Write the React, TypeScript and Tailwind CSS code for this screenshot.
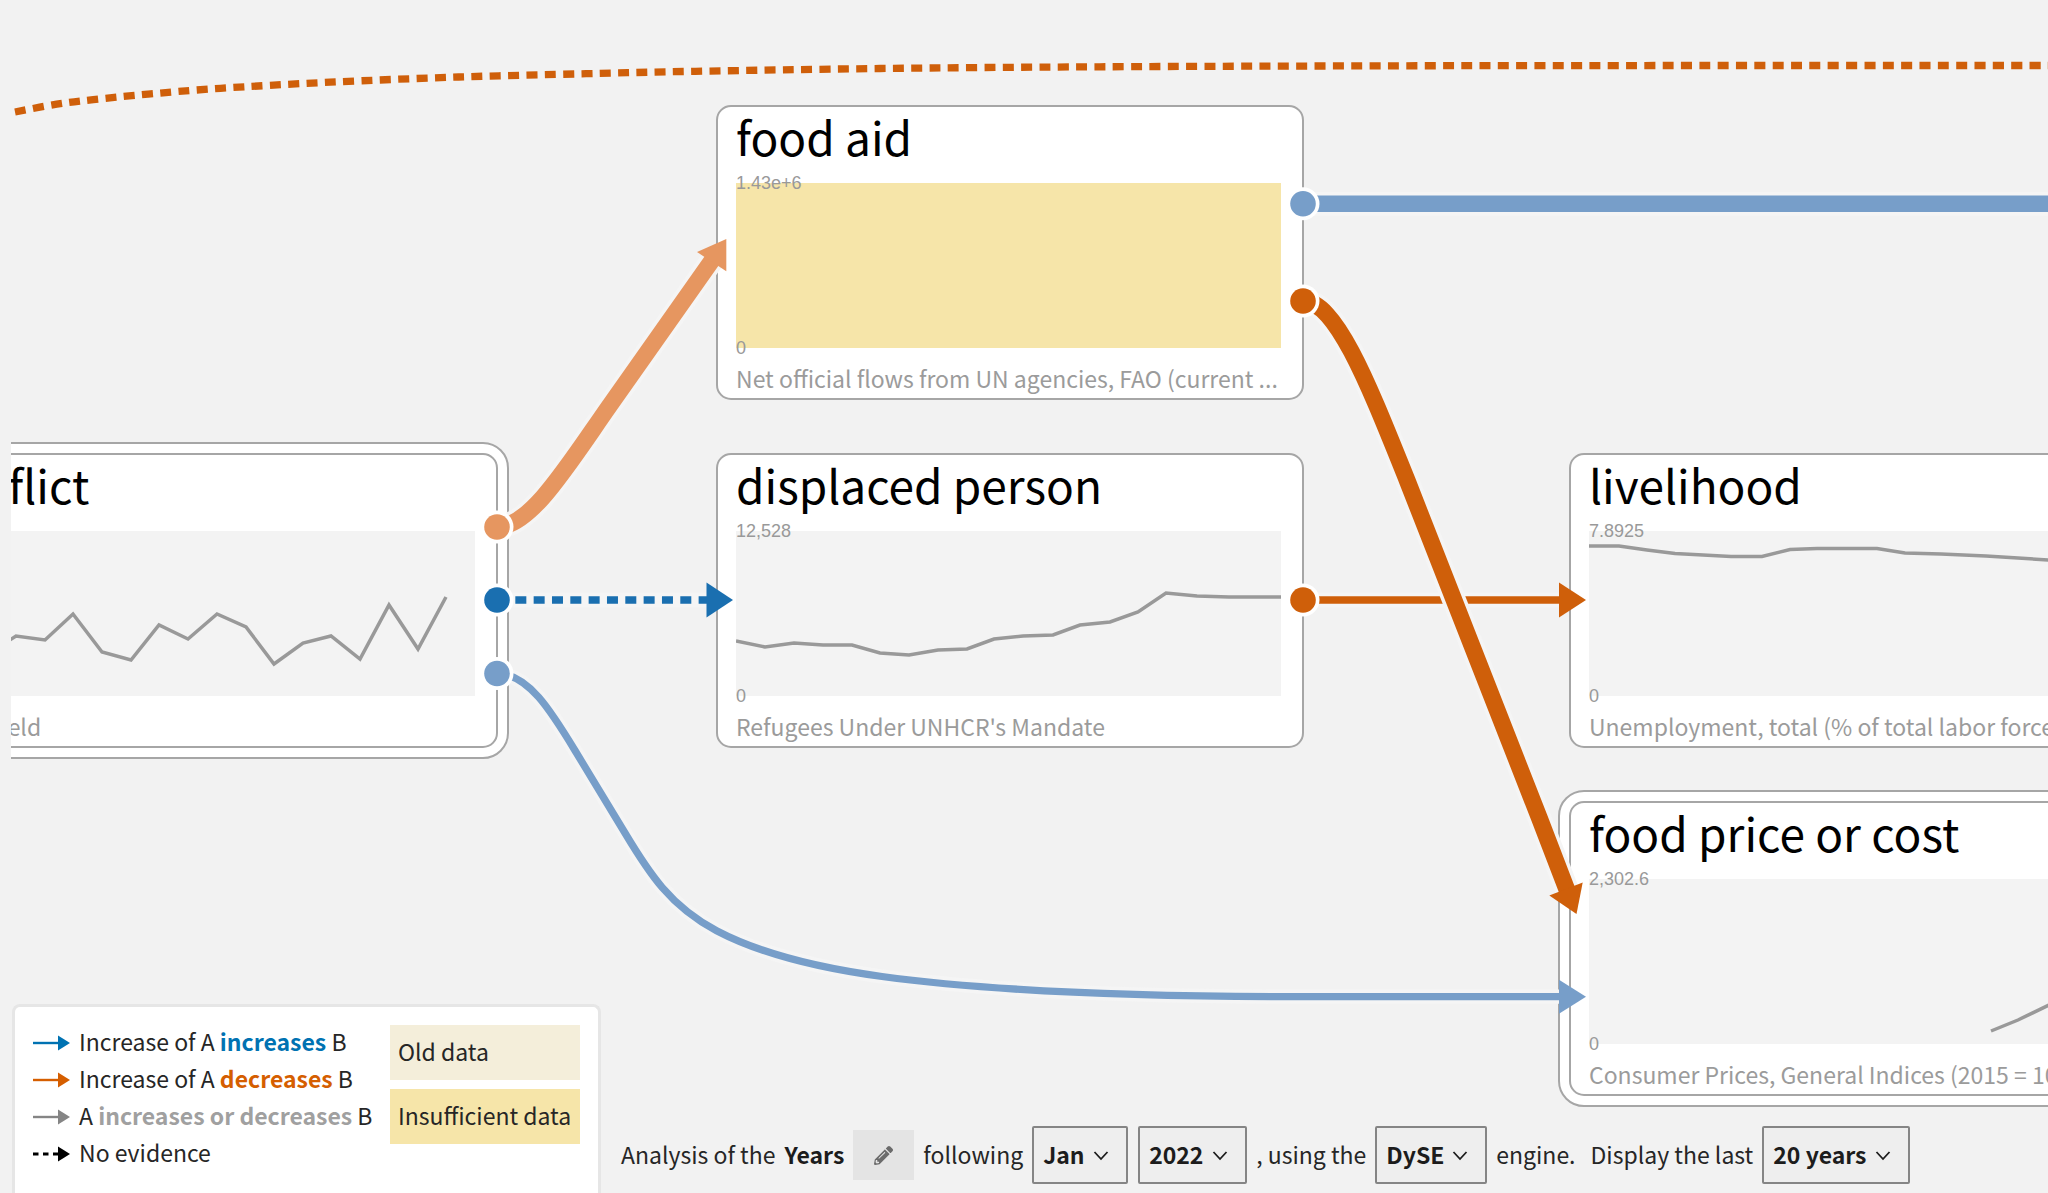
import type { ReactNode } from "react";
import { FaPencilAlt } from "react-icons/fa";

type Point = [number, number];

const SANS = "font-['Noto_Sans_CJK_SC','Open_Sans',sans-serif]";
const BLUE = "#1a6fb0";
const LIGHT_BLUE = "#779ec9";
const ORANGE = "#cf5f0a";
const LIGHT_ORANGE = "#e69660";
const HALO = "#f5f5f5";

/* Catmull-Rom spline through the points, written as cubic Béziers. */
function smooth(points: Point[]): string {
  let d = `M${points[0][0]} ${points[0][1]}`;
  for (let i = 0; i < points.length - 1; i++) {
    const p0 = points[Math.max(i - 1, 0)];
    const p1 = points[i];
    const p2 = points[i + 1];
    const p3 = points[Math.min(i + 2, points.length - 1)];
    const c1 = [p1[0] + (p2[0] - p0[0]) / 6, p1[1] + (p2[1] - p0[1]) / 6];
    const c2 = [p2[0] - (p3[0] - p1[0]) / 6, p2[1] - (p3[1] - p1[1]) / 6];
    d += ` C${c1[0]} ${c1[1]} ${c2[0]} ${c2[1]} ${p2[0]} ${p2[1]}`;
  }
  return d;
}

type NodeProps = {
  title: string;
  source: string;
  max?: string;
  line?: string;
  insufficient?: boolean;
};

function NodeCard({ title, source, max, line, insufficient }: NodeProps) {
  return (
    <article className="w-[588px] rounded-[15px] border-2 border-[#a6a6a6] bg-white px-[18px]">
      <h2 className="mb-[17px] truncate text-[46px] leading-[59px] text-black">{title}</h2>
      <div className={insufficient ? "relative h-[165px] w-[545px] bg-[#f6e5a9]" : "relative h-[165px] w-[545px] bg-[#f3f3f3]"}>
        {line && (
          <svg className="block h-full w-full" viewBox="0 0 545 165" aria-hidden="true">
            <polyline points={line} fill="none" stroke="#999" strokeWidth="3.5" strokeLinejoin="miter" />
          </svg>
        )}
        <span className="absolute -top-[9px] left-0 font-['Liberation_Sans',sans-serif] text-[18px] leading-[18px] text-[#999]">
          {max}
        </span>
        <span className="absolute -bottom-[9px] left-0 font-['Liberation_Sans',sans-serif] text-[18px] leading-[18px] text-[#999]">
          0
        </span>
      </div>
      <p className="mt-[10px] truncate text-[23px] leading-[40px] text-[#9b9b9b]">{source}</p>
    </article>
  );
}

function Ring({ children }: { children: ReactNode }) {
  return <div className="rounded-[26px] border-2 border-[#a6a6a6] bg-white p-[9px]">{children}</div>;
}

function Port({ x, y, color }: { x: number; y: number; color: string }) {
  return (
    <g>
      <circle cx={x} cy={y} r="16.5" fill="#fff" />
      <circle cx={x} cy={y} r="12.8" fill={color} />
    </g>
  );
}

function Edge({ d, color, width, dash, head }: { d: string; color: string; width: number; dash?: string; head?: string }) {
  return (
    <g fill="none">
      <path d={d} stroke={HALO} strokeWidth={width + 7} />
      <path d={d} stroke={color} strokeWidth={width} strokeDasharray={dash} />
      {head && <polygon points={head} fill={color} />}
    </g>
  );
}

function Connectors() {
  return (
    <svg className="pointer-events-none absolute inset-0 h-full w-full overflow-visible" aria-hidden="true">
      <g transform="translate(-11 0)">
        <path
          d={smooth([
            [15, 112], [56.7, 104.2], [93.3, 99.6], [147.8, 94.2], [220.5, 88.3], [330, 82.2],
            [458.5, 77], [586, 73.7], [695.5, 71.3], [880, 68.5], [1100, 66.8], [1400, 65.8], [1700, 65.5], [2060, 65.5],
          ])}
          fill="none"
          stroke={ORANGE}
          strokeWidth="7.3"
          strokeDasharray="11 7.33"
        />
        <Edge d="M1303 203.7H2060" color={LIGHT_BLUE} width={16.6} />
        <Edge d="M1303 600H1560" color={ORANGE} width={7.3} head="1559,582.5 1586,600 1559,617.5" />
        <Edge
          d="M1303 301C1336 301 1368 383 1407 480C1439 560 1507 733 1567 890"
          color={ORANGE}
          width={16.8}
          head="1549.3,895.4 1582.7,882.4 1576.5,914"
        />
        <Edge
          d="M497 527C530 527 566 468 608.3 407.5L713 259"
          color={LIGHT_ORANGE}
          width={16.8}
          head="697,252 726.3,271.3 726.3,239"
        />
        <Edge d="M497 600H707" color={BLUE} width={7.3} dash="11 7.33" head="706.5,582.5 733,600 706.5,617.5" />
        <Edge
          d="M497 673.5C528 673.5 551 711 575 750.5L625 833C649 873 670 906 716.6 930.7C761 954 819 968 882 976.5C982 990 1120 996.7 1300 996.7H1560"
          color={LIGHT_BLUE}
          width={7.3}
          head="1559,979.7 1586,996.7 1559,1013.7"
        />
        <Port x={497} y={527} color={LIGHT_ORANGE} />
        <Port x={497} y={600} color={BLUE} />
        <Port x={497} y={673.5} color={LIGHT_BLUE} />
        <Port x={1303} y={203.7} color={LIGHT_BLUE} />
        <Port x={1303} y={301} color={ORANGE} />
        <Port x={1303} y={600} color={ORANGE} />
      </g>
    </svg>
  );
}

function LegendRow({ color, dashed, children }: { color: string; dashed?: boolean; children: ReactNode }) {
  return (
    <li className="flex items-center gap-[9px] whitespace-nowrap">
      <svg className="mt-[2px] h-4 w-[37px] shrink-0" viewBox="0 0 37 16" aria-hidden="true">
        <path d="M0 8H26" stroke={color} strokeWidth={dashed ? 3 : 2.4} strokeDasharray={dashed ? "5.5 4.5" : undefined} />
        <polygon points="25,0.5 37,8 25,15.5" fill={color} />
      </svg>
      <span>{children}</span>
    </li>
  );
}

function Legend() {
  return (
    <aside className="ml-3 flex h-[189px] w-[589px] shrink-0 items-start justify-between rounded-t-lg border-[3px] border-b-0 border-[#e6e6e6] bg-white pt-4 pr-[18px] pl-[18px] text-[23px]">
      <ul className="leading-[37px]">
        <LegendRow color="#0072b2">
          Increase of A <b className="text-[#0072b2]">increases</b> B
        </LegendRow>
        <LegendRow color="#d55e00">
          Increase of A <b className="text-[#d55e00]">decreases</b> B
        </LegendRow>
        <LegendRow color="#858585">
          A <b className="text-[#a0a0a0]">increases or decreases</b> B
        </LegendRow>
        <LegendRow color="#000" dashed>
          No evidence
        </LegendRow>
      </ul>
      <div className="mt-[2px] flex w-[190px] flex-col gap-[9px] leading-[53px]">
        <p className="bg-[#f4eeda] pb-[2px] pl-[8px]">Old data</p>
        <p className="bg-[#f6e5a9] pb-[2px] pl-[8px]">Insufficient data</p>
      </div>
    </aside>
  );
}

function Picker({ label, options, width }: { label: string; options: string[]; width: string }) {
  return (
    <span className={"relative block " + width}>
      <select
        aria-label={label}
        className="block h-[58px] w-full appearance-none rounded-[2px] border-2 border-[#858585] bg-[#eeeeee] pb-[2px] pl-[9px] text-[23px] font-bold text-[#1c1c1c]"
      >
        {options.map((o) => (
          <option key={o}>{o}</option>
        ))}
      </select>
      <svg className="pointer-events-none absolute top-[25px] right-[19px] h-[10px] w-4" viewBox="0 0 16 10" aria-hidden="true">
        <path d="M1.5 1L8 8L14.5 1" fill="none" stroke="#1c1c1c" strokeWidth="1.8" />
      </svg>
    </span>
  );
}

function Toolbar() {
  return (
    <form className="mb-[9px] ml-5 flex items-center text-[23px] whitespace-nowrap text-[#262626]">
      <span className="pb-[2px]">Analysis of the</span>
      <b className="ml-[9px] pb-[2px] text-[#1c1c1c]">Years</b>
      <button type="button" aria-label="Edit timescale" className="ml-[9px] flex h-[50px] w-[61px] items-center justify-center bg-[#e4e4e4] text-[#6b6b6b]">
        <FaPencilAlt className="size-[19px]" />
      </button>
      <span className="ml-[9px] pb-[2px]">following</span>
      <div className="ml-[9px] flex gap-[10px]">
        <Picker label="Month" options={["Jan", "Feb", "Mar"]} width="w-[96px]" />
        <Picker label="Year" options={["2022", "2021", "2020"]} width="w-[109px]" />
      </div>
      <span className="ml-[9px] pb-[2px]">, using the</span>
      <div className="ml-[9px]">
        <Picker label="Engine" options={["DySE", "DySE 2"]} width="w-[112px]" />
      </div>
      <span className="ml-[9px] pb-[2px]">engine.</span>
      <span className="ml-[15px] pb-[2px]">Display the last</span>
      <div className="ml-[9px]">
        <Picker label="History length" options={["20 years", "10 years", "5 years"]} width="w-[148px]" />
      </div>
    </form>
  );
}

export default function App() {
  return (
    <div className={"flex h-screen flex-col overflow-hidden bg-[#f2f2f2] text-[#262626] " + SANS}>
      <main className="relative ml-[11px] min-h-0 flex-1 overflow-x-clip">
        <div className="absolute top-[442px] left-[-112px]">
          <Ring>
            <NodeCard
              title="conflict"
              source="Battlefield"
              line="57,124 86,105 115,109 143,83 172,121 201,129 229,94 258,108 287,83 316,96 344,133 373,112 401,105 430,128 459,74 488,118 516,66"
            />
          </Ring>
        </div>
        <div className="absolute top-[105px] left-[705px]">
          <NodeCard title="food aid" max="1.43e+6" source="Net official flows from UN agencies, FAO (current ..." insufficient />
        </div>
        <div className="absolute top-[453px] left-[705px]">
          <NodeCard
            title="displaced person"
            max="12,528"
            source="Refugees Under UNHCR's Mandate"
            line="0,110 29,116 58,112 87,114 116,114 144,122 173,124 202,119 231,118 258,108 287,105 317,104 344,94 374,91 402,81 430,62 461,65 493,66 545,66"
          />
        </div>
        <div className="absolute top-[453px] left-[1558px]">
          <NodeCard
            title="livelihood"
            max="7.8925"
            source="Unemployment, total (% of total labor force)"
            line="0,15 30,15 58,19 86,22.5 142,25.5 173,25.5 201,18.5 228,17.5 288,17.5 316,22 352,23 397,25 429,27 460,29 545,33"
          />
        </div>
        <div className="absolute top-[790px] left-[1547px]">
          <Ring>
            <NodeCard
              title="food price or cost"
              max="2,302.6"
              source="Consumer Prices, General Indices (2015 = 100)"
              line="402,152 429,141 460,126 500,100 545,60"
            />
          </Ring>
        </div>
        <Connectors />
      </main>
      <footer className="relative flex items-end">
        <Legend />
        <Toolbar />
      </footer>
    </div>
  );
}
